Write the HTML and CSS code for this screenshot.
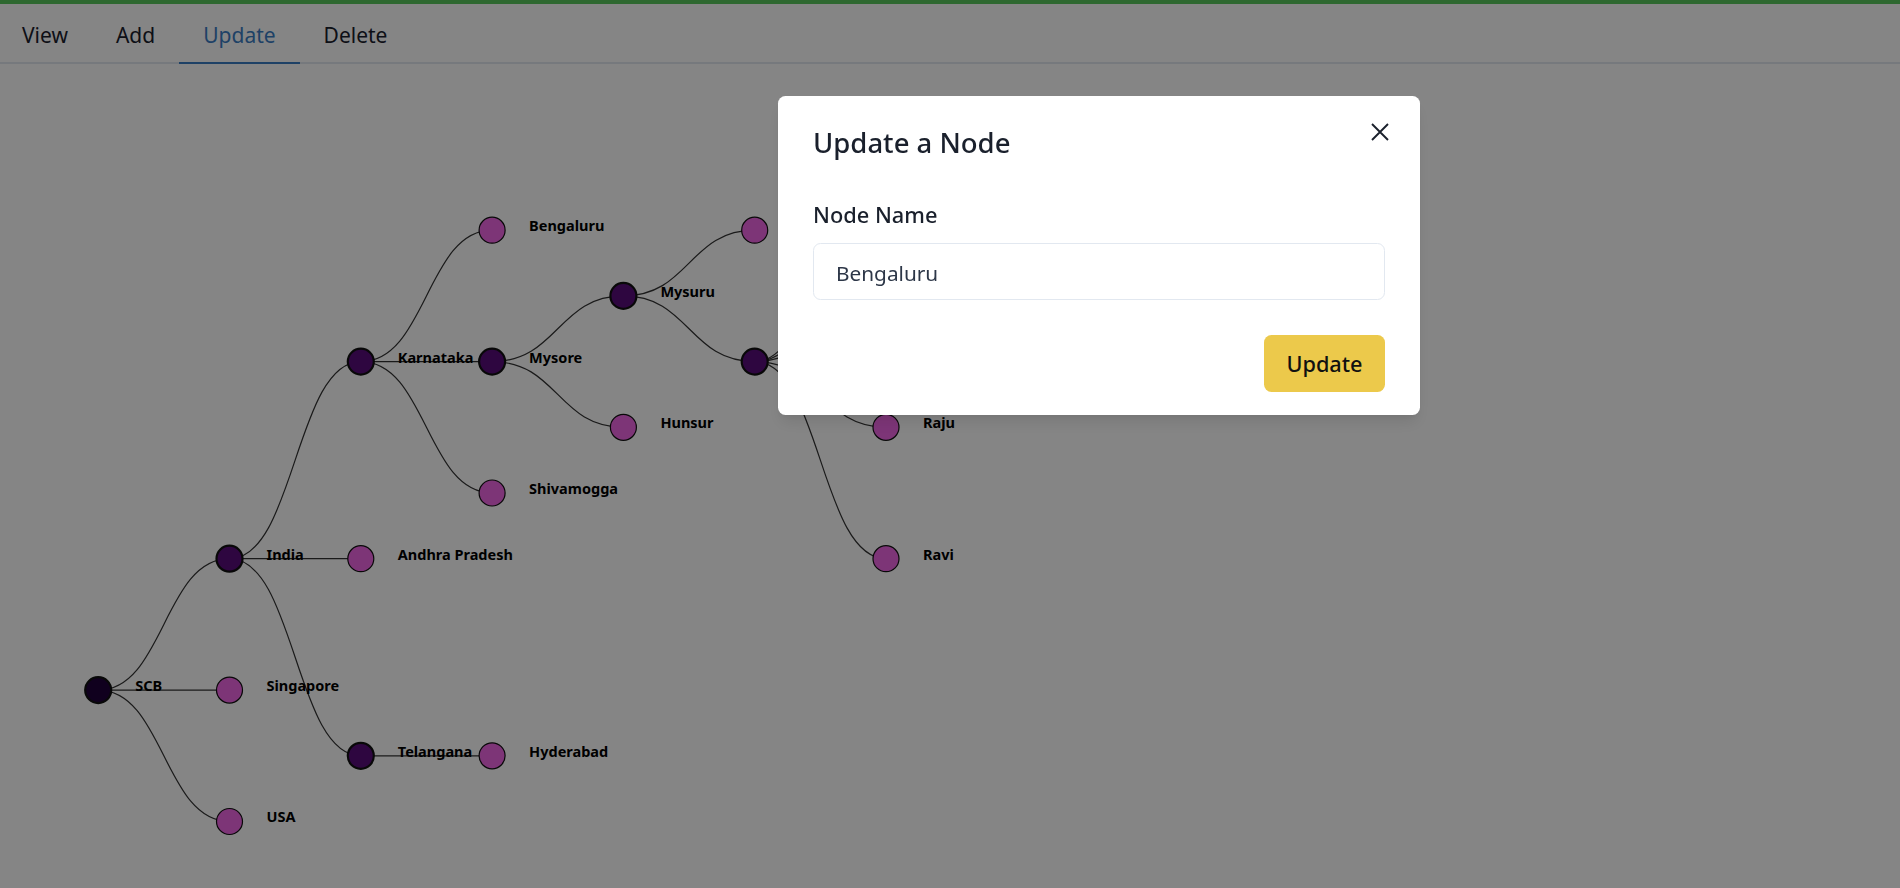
FILE: index.html
```html
<!DOCTYPE html>
<html lang="en">
<head>
<meta charset="utf-8">
<title>Tree editor</title>
<link rel="stylesheet" href="styles.css">
</head>
<body>
<div class="app">
  <div class="topbar"></div>
  <nav class="tabs" role="tablist">
    <button class="tab" role="tab">View</button>
    <button class="tab" role="tab">Add</button>
    <button class="tab is-active" role="tab" aria-selected="true">Update</button>
    <button class="tab" role="tab">Delete</button>
  </nav>
  <main class="canvas">
    <svg class="tree" viewBox="0 0 1900 824" preserveAspectRatio="xMinYMin meet">
      <g transform="translate(98.2,166.2)">
        <path class="link" d="M0,459.9C65.65,459.9 65.65,328.5 131.3,328.5"/>
        <path class="link" d="M0,459.9C65.65,459.9 65.65,459.9 131.3,459.9"/>
        <path class="link" d="M0,459.9C65.65,459.9 65.65,591.3 131.3,591.3"/>
        <path class="link" d="M131.3,328.5C196.95,328.5 196.95,131.4 262.6,131.4"/>
        <path class="link" d="M131.3,328.5C196.95,328.5 196.95,328.5 262.6,328.5"/>
        <path class="link" d="M131.3,328.5C196.95,328.5 196.95,525.6 262.6,525.6"/>
        <path class="link" d="M262.6,131.4C328.25,131.4 328.25,0 393.9,0"/>
        <path class="link" d="M262.6,131.4C328.25,131.4 328.25,131.4 393.9,131.4"/>
        <path class="link" d="M262.6,131.4C328.25,131.4 328.25,262.8 393.9,262.8"/>
        <path class="link" d="M262.6,525.6C328.25,525.6 328.25,525.6 393.9,525.6"/>
        <path class="link" d="M393.9,131.4C459.55,131.4 459.55,65.7 525.2,65.7"/>
        <path class="link" d="M393.9,131.4C459.55,131.4 459.55,197.1 525.2,197.1"/>
        <path class="link" d="M525.2,65.7C590.85,65.7 590.85,0 656.5,0"/>
        <path class="link" d="M525.2,65.7C590.85,65.7 590.85,131.4 656.5,131.4"/>
        <path class="link" d="M656.5,131.4C722.15,131.4 722.15,-65.7 787.8,-65.7"/>
        <path class="link" d="M656.5,131.4C722.15,131.4 722.15,0 787.8,0"/>
        <path class="link" d="M656.5,131.4C722.15,131.4 722.15,65.7 787.8,65.7"/>
        <path class="link" d="M656.5,131.4C722.15,131.4 722.15,197.1 787.8,197.1"/>
        <path class="link" d="M656.5,131.4C722.15,131.4 722.15,328.5 787.8,328.5"/>

        <circle class="node node--root" cx="0" cy="459.9" r="13"/>
        <circle class="node node--branch" cx="131.3" cy="328.5" r="13"/>
        <circle class="node node--leaf" cx="131.3" cy="459.9" r="13"/>
        <circle class="node node--leaf" cx="131.3" cy="591.3" r="13"/>
        <circle class="node node--branch" cx="262.6" cy="131.4" r="13"/>
        <circle class="node node--leaf" cx="262.6" cy="328.5" r="13"/>
        <circle class="node node--branch" cx="262.6" cy="525.6" r="13"/>
        <circle class="node node--leaf" cx="393.9" cy="0" r="13"/>
        <circle class="node node--branch" cx="393.9" cy="131.4" r="13"/>
        <circle class="node node--leaf" cx="393.9" cy="262.8" r="13"/>
        <circle class="node node--leaf" cx="393.9" cy="525.6" r="13"/>
        <circle class="node node--branch" cx="525.2" cy="65.7" r="13"/>
        <circle class="node node--leaf" cx="525.2" cy="197.1" r="13"/>
        <circle class="node node--leaf" cx="656.5" cy="0" r="13"/>
        <circle class="node node--branch" cx="656.5" cy="131.4" r="13"/>
        <circle class="node node--leaf" cx="787.8" cy="-65.7" r="13"/>
        <circle class="node node--leaf" cx="787.8" cy="0" r="13"/>
        <circle class="node node--leaf" cx="787.8" cy="65.7" r="13"/>
        <circle class="node node--leaf" cx="787.8" cy="197.1" r="13"/>
        <circle class="node node--leaf" cx="787.8" cy="328.5" r="13"/>

        <text class="label" x="37" y="460.9">SCB</text>
        <text class="label" x="168.3" y="329.5">India</text>
        <text class="label" x="168.3" y="460.9">Singapore</text>
        <text class="label" x="168.3" y="592.3">USA</text>
        <text class="label" x="299.6" y="132.4">Karnataka</text>
        <text class="label" x="299.6" y="329.5">Andhra Pradesh</text>
        <text class="label" x="299.6" y="526.6">Telangana</text>
        <text class="label" x="430.9" y="1">Bengaluru</text>
        <text class="label" x="430.9" y="132.4">Mysore</text>
        <text class="label" x="430.9" y="263.8">Shivamogga</text>
        <text class="label" x="430.9" y="526.6">Hyderabad</text>
        <text class="label" x="562.2" y="66.7">Mysuru</text>
        <text class="label" x="562.2" y="198.1">Hunsur</text>
        <text class="label" x="824.8" y="198.1">Raju</text>
        <text class="label" x="824.8" y="329.5">Ravi</text>
      </g>
    </svg>
  </main>
</div>

<div class="backdrop"></div>
<section class="modal" role="dialog" aria-labelledby="modal-title">
  <h2 class="modal-title" id="modal-title">Update a Node</h2>
  <button class="modal-close" aria-label="Close">
    <svg viewBox="0 0 18 18" width="18" height="18"><path d="M1 1L17 17M17 1L1 17" stroke="#1a202c" stroke-width="1.9" fill="none"/></svg>
  </button>
  <label class="field-label" for="node-name">Node Name</label>
  <input class="field-input" id="node-name" type="text" value="Bengaluru">
  <div class="modal-footer">
    <button class="btn-primary">Update</button>
  </div>
</section>
</body>
</html>
```

FILE: styles.css
```css
* { box-sizing: border-box; }
html, body { margin: 0; height: 100%; }
body {
  font-family: "Noto Sans", "Open Sans", sans-serif;
  color: #1a202c;
  background: #fff;
  overflow: hidden;
}
.topbar { height: 4px; background: #58c85c; }
.tabs {
  display: flex;
  border-bottom: 2px solid #e2e8f0;
}
.tab {
  font: inherit;
  font-size: 21px;
  line-height: 30px;
  padding: 16px 24px 12px;
  margin-bottom: -2px;
  border: 0;
  border-bottom: 2px solid transparent;
  background: none;
  color: #1a202c;
  cursor: pointer;
}
.tab:first-child { margin-left: -2px; }
.tab.is-active { color: #3b7dc4; border-bottom-color: currentColor; }
.canvas { display: block; }
.tree { display: block; width: 1900px; height: 824px; }
.link { fill: none; stroke: #333; stroke-width: 1.2; }
.node { stroke: #111; }
.node--leaf { fill: #f066e5; stroke-width: 1.2; }
.node--branch { fill: #580c7b; stroke-width: 2.2; }
.node--root { fill: #1f003a; stroke-width: 2.2; }
.label {
  font-family: "Noto Sans", sans-serif;
  font-weight: 700;
  font-size: 14.5px;
  fill: #000;
}
.backdrop {
  position: fixed;
  inset: 0;
  background: rgba(0, 0, 0, 0.48);
}
.modal {
  position: fixed;
  left: 778px;
  top: 96px;
  width: 642px;
  padding: 30px 35px 23px;
  background: #fff;
  border-radius: 7.5px;
  box-shadow: 0 10px 15px -3px rgba(0,0,0,0.1), 0 4px 6px -2px rgba(0,0,0,0.05);
}
.modal-title {
  margin: 0;
  font-size: 27.5px;
  line-height: 33px;
  font-weight: 500;
  color: #1a202c;
}
.modal-close {
  position: absolute;
  top: 27px;
  right: 31px;
  width: 18px;
  height: 18px;
  padding: 0;
  border: 0;
  background: none;
  cursor: pointer;
}
.modal-close svg { display: block; }
.field-label {
  display: block;
  margin-top: 40px;
  margin-bottom: 12px;
  font-size: 21.8px;
  line-height: 32px;
  font-weight: 500;
}
.field-input {
  display: block;
  width: 100%;
  height: 57px;
  padding: 3px 22px 0;
  border: 1px solid #e2e8f0;
  border-radius: 7.5px;
  font: inherit;
  font-size: 20.8px;
  color: #2d3748;
  outline: none;
}
.modal-footer {
  display: flex;
  justify-content: flex-end;
  margin-top: 35px;
}
.btn-primary {
  width: 121px;
  height: 57px;
  border: 0;
  border-radius: 7.5px;
  background: #ecc94b;
  font: inherit;
  font-size: 21.7px;
  font-weight: 500;
  color: #111;
  cursor: pointer;
}
```
